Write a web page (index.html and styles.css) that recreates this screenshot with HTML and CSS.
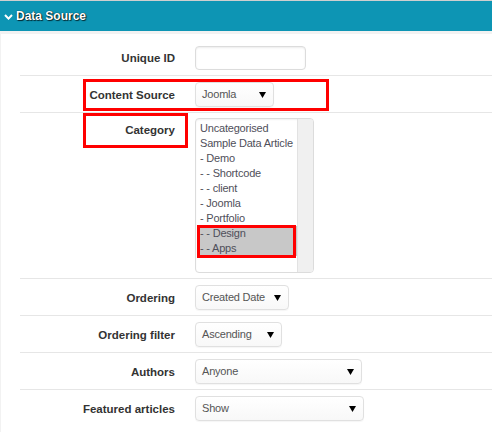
FILE: index.html
```html
<!DOCTYPE html>
<html>
<head>
<meta charset="utf-8">
<link rel="stylesheet" href="styles.css">
</head>
<body>
<div class="panel">
  <div class="panel-head">
    <svg class="chev" width="9" height="6" viewBox="0 0 9 6"><polyline points="1,1 4.5,4.6 8,1" fill="none" stroke="#fff" stroke-width="2"/></svg>
    <span class="title">Data Source</span>
  </div>
  <div class="panel-body">
    <div class="form">
      <div class="row">
        <div class="label">Unique ID</div>
        <div class="ctrl"><div class="input"></div></div>
      </div>
      <div class="row">
        <div class="label">Content Source</div>
        <div class="ctrl"><div class="select w-cs"><span>Joomla</span><svg class="arr" width="7" height="6" viewBox="0 0 7 6"><polygon points="0,0 7,0 3.5,6" fill="#000"/></svg></div></div>
        <div class="mark mark-cs"></div>
      </div>
      <div class="row row-top">
        <div class="label">Category</div>
        <div class="ctrl">
          <div class="listbox">
            <div class="opts">
              <div class="opt">Uncategorised</div>
              <div class="opt">Sample Data Article</div>
              <div class="opt">- Demo</div>
              <div class="opt">- - Shortcode</div>
              <div class="opt">- - client</div>
              <div class="opt">- Joomla</div>
              <div class="opt">- Portfolio</div>
              <div class="opt sel">- - Design</div>
              <div class="opt sel">- - Apps</div>
              <div class="mark mark-sel"></div>
            </div>
            <div class="track"></div>
          </div>
        </div>
        <div class="mark mark-cat"></div>
      </div>
      <div class="row">
        <div class="label">Ordering</div>
        <div class="ctrl"><div class="select w-ord"><span>Created Date</span><svg class="arr" width="7" height="6" viewBox="0 0 7 6"><polygon points="0,0 7,0 3.5,6" fill="#000"/></svg></div></div>
      </div>
      <div class="row">
        <div class="label">Ordering filter</div>
        <div class="ctrl"><div class="select w-of"><span>Ascending</span><svg class="arr" width="7" height="6" viewBox="0 0 7 6"><polygon points="0,0 7,0 3.5,6" fill="#000"/></svg></div></div>
      </div>
      <div class="row">
        <div class="label">Authors</div>
        <div class="ctrl"><div class="select w-au"><span>Anyone</span><svg class="arr" width="7" height="6" viewBox="0 0 7 6"><polygon points="0,0 7,0 3.5,6" fill="#000"/></svg></div></div>
      </div>
      <div class="row">
        <div class="label">Featured articles</div>
        <div class="ctrl"><div class="select w-fa"><span>Show</span><svg class="arr" width="7" height="6" viewBox="0 0 7 6"><polygon points="0,0 7,0 3.5,6" fill="#000"/></svg></div></div>
      </div>
    </div>
  </div>
</div>
</body>
</html>
```
FILE: styles.css
```css
html, body {
  margin: 0;
  padding: 0;
  background: #fff;
}
body {
  font-family: "Liberation Sans", Arial, sans-serif;
  font-size: 12px;
  color: #333;
}
.panel {
  border-top: 1px solid #cfcfcf;
  background: #f2f2f2;
  height: 431px;
  overflow: hidden;
}
.panel-head {
  height: 30px;
  background: #0d95b4;
  display: flex;
  align-items: center;
  padding-left: 4px;
}
.chev {
  display: block;
  margin-right: 3px;
  margin-top: 1px;
}
.title {
  color: #fff;
  font-weight: bold;
  font-size: 12px;
  text-shadow: 0 0 1px #000, 1px 1px 1px rgba(0,0,0,0.7);
}
.panel-body {
  background: #fff;
  margin-top: 3px;
  margin-left: 1px;
  padding-top: 6px;
  height: 400px;
}
.form {
  margin-left: 19px;
}
.row {
  position: relative;
  display: flex;
  align-items: center;
  padding: 6px 0 5px;
  border-top: 1px solid #e6e6e6;
}
.row:first-child {
  border-top: none;
}
.row-top {
  align-items: flex-start;
  padding: 5px 0 5px;
}
.label {
  width: 155px;
  text-align: right;
  font-weight: bold;
  font-size: 11.5px;
  color: #333;
  line-height: 24px;
}
.ctrl {
  margin-left: 20px;
}
.input {
  width: 109px;
  height: 22px;
  border: 1px solid #dcdcdc;
  border-radius: 4px;
  box-shadow: inset 0 1px 2px rgba(0,0,0,0.08);
  background: #fff;
}
.select {
  height: 23px;
  border: 1px solid #e0e0e0;
  border-radius: 4px;
  background: linear-gradient(#fff, #f8f8f8);
  box-shadow: 0 1px 1px rgba(0,0,0,0.04);
  display: flex;
  align-items: center;
  justify-content: space-between;
  padding: 0 7px 0 6px;
  color: #555;
  font-size: 11px;
  letter-spacing: -0.2px;
  box-sizing: content-box;
}
.select span {
  line-height: 23px;
}
.arr {
  display: block;
}
.w-cs { width: 64px; }
.w-ord { width: 79px; }
.w-of { width: 72px; }
.w-au { width: 152px; }
.w-fa { width: 154px; }
.listbox {
  width: 117px;
  height: 153px;
  border: 1px solid #dcdcdc;
  border-radius: 4px;
  display: flex;
  overflow: hidden;
  box-shadow: inset 0 1px 2px rgba(0,0,0,0.06);
}
.opts {
  position: relative;
  flex: 1;
  min-width: 0;
  padding-top: 2px;
}
.opt {
  line-height: 15px;
  height: 15px;
  padding-left: 4px;
  color: #4f4f5a;
  font-size: 11px;
  letter-spacing: -0.2px;
  white-space: nowrap;
  overflow: hidden;
}
.opt.sel {
  background: #c8c8c8;
  margin-left: 1px;
  padding-left: 3px;
}
.track {
  width: 15px;
  flex: none;
  background: #f0f0f0;
  border-left: 1px solid #e2e2e2;
}
.mark {
  position: absolute;
  border: 3px solid #f00;
  box-sizing: border-box;
}
.mark-cs {
  left: 63px;
  top: 3px;
  width: 246px;
  height: 32px;
}
.mark-cat {
  left: 63px;
  top: 0;
  width: 105px;
  height: 35px;
}
.mark-sel {
  left: 1px;
  top: 106px;
  width: 99px;
  height: 33px;
}
```
